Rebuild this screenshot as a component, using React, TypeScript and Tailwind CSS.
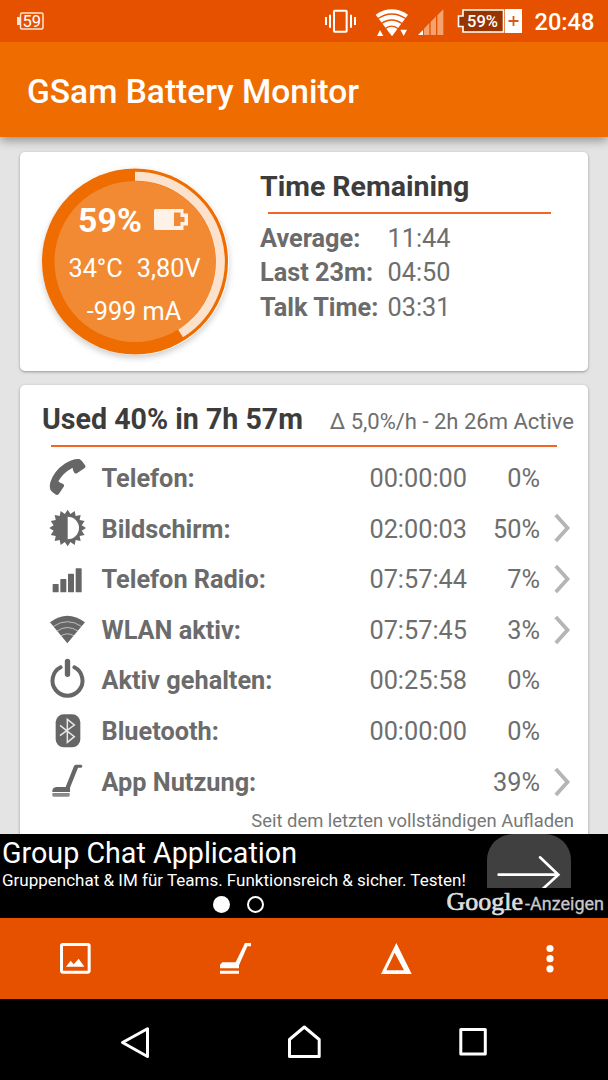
import type { ReactNode } from "react";

type Usage = {
  label: string;
  time?: string;
  percent: string;
  icon: ReactNode;
  more?: boolean;
};

const PhoneIcon = () => (
  <svg className="mb-[2px]" width="38" height="38" viewBox="117 234 114 114" fill="#666">
    <path d="M208 237 Q214 239 226 257 Q228 262 223 265 L202 279 Q196 283 193 278 Q187 268 188 263 Q158 279 145 304 Q150 309 158 311 Q164 313 162 319 L147 341 Q142 348 136 343 Q124 334 121 329 Q117 320 121 307 Q131 273 164 251 Q189 235 208 237Z" />
  </svg>
);

const spikes = Array.from({ length: 32 }, (_, i) => {
  const r = i % 2 ? 43 : 55;
  const a = (i * Math.PI) / 16;
  return `${(57 + r * Math.sin(a)).toFixed(1)},${(57 - r * Math.cos(a)).toFixed(1)}`;
}).join(" ");

const ScreenIcon = () => (
  <svg className="mb-[2px]" width="38" height="38" viewBox="1 0 114 114">
    <polygon points={spikes} fill="#666" />
    <path d="M57 23 A34 34 0 0 1 57 91Z" fill="#fff" />
  </svg>
);

const SignalIcon = () => (
  <svg className="mb-[1px]" width="38" height="38" viewBox="117 541 114 114" fill="#666">
    <rect x="128" y="613" width="18" height="25" rx="2" />
    <rect x="151" y="598" width="18" height="40" rx="2" />
    <rect x="174" y="582" width="18" height="56" rx="2" />
    <rect x="197" y="566" width="18" height="72" rx="2" />
  </svg>
);

const WifiIcon = () => (
  <svg className="mb-[3px]" width="38" height="38" viewBox="117 30 114 114">
    <path d="M120 67 Q172 28 225 67 L172 130Z" fill="#666" />
    <g fill="none" stroke="#d0d0d0" strokeWidth="2.500">
      <path d="M129 80 Q172 50 216 80" />
      <path d="M140 94 Q172 71 205 94" />
      <path d="M152 108 Q172 95 193 108" />
    </g>
  </svg>
);

const PowerIcon = () => (
  <svg className="mb-[6px]" width="38" height="40" viewBox="117 174 114 120" fill="none" stroke="#666" strokeLinecap="round">
    <path d="M152 202 A45 45 0 1 0 193 202" strokeWidth="12" />
    <path d="M172.500 184 V223" strokeWidth="16" />
  </svg>
);

const BluetoothIcon = () => (
  <svg className="mb-[2px]" width="38" height="38" viewBox="117 334 114 114">
    <rect x="137" y="341" width="74" height="99" rx="24" fill="#666" />
    <path d="M150 374 L193 408 L172 425 V356 L193 373 L150 405" fill="none" stroke="#e8e8e8" strokeWidth="4.500" />
  </svg>
);

const VacuumIcon = () => (
  <svg className="mb-[2px]" width="38" height="38" viewBox="117 487 114 114" fill="#666">
    <path d="M198 495 H213 Q217 496 217 500 Q217 504 213 504 H204 L180 564 V577 H127 V571 Q129 563 138 562 H167 L192 499 Q194 495 198 495Z" />
    <path d="M127 580 H179 V587 Q179 591 175 591 H131 Q127 591 127 587Z" fill="#8a8a8a" />
  </svg>
);

const rows: Usage[] = [
  { label: "Telefon:", time: "00:00:00", percent: "0%", icon: <PhoneIcon /> },
  { label: "Bildschirm:", time: "02:00:03", percent: "50%", icon: <ScreenIcon />, more: true },
  { label: "Telefon Radio:", time: "07:57:44", percent: "7%", icon: <SignalIcon />, more: true },
  { label: "WLAN aktiv:", time: "07:57:45", percent: "3%", icon: <WifiIcon />, more: true },
  { label: "Aktiv gehalten:", time: "00:25:58", percent: "0%", icon: <PowerIcon /> },
  { label: "Bluetooth:", time: "00:00:00", percent: "0%", icon: <BluetoothIcon /> },
  { label: "App Nutzung:", percent: "39%", icon: <VacuumIcon />, more: true },
];

const remaining = [
  ["Average:", "11:44"],
  ["Last 23m:", "04:50"],
  ["Talk Time:", "03:31"],
];

function StatusBar() {
  return (
    <div className="relative z-10 flex h-[42px] shrink-0 items-start bg-[#e65100] pl-[17px] text-white">
      <svg className="mt-3" width="27" height="18" viewBox="0 0 27 18" fill="none">
        <rect x="3.500" y="1" width="22.500" height="16" rx="1.500" stroke="#ffe3d0" strokeWidth="1.500" />
        <path d="M0 5 H3 V13 H0Z" fill="#ffe3d0" />
        <text x="14.700" y="14.800" textAnchor="middle" fontSize="16.500" fill="#fff" className="font-['Roboto',sans-serif]">59</text>
      </svg>

      {/* vibrate */}
      <svg className="mt-[9px] ml-[281px]" width="31" height="24" viewBox="63 27 93 72" fill="none" stroke="#fff" strokeWidth="6">
        <rect x="90" y="32" width="38" height="63" rx="2" />
        <path d="M78 44 V83 M66 51 V75 M141 44 V83 M153 51 V75" />
      </svg>

      {/* wifi with traffic arrows */}
      <svg className="mt-[9px] ml-[19px]" width="34" height="28" viewBox="213 27 102 84" fill="none">
        <path d="M215 44 Q263 12 312 44 L264 109Z" fill="#fff" />
        <path d="M220 57 Q263 27 307 57 M230 72 Q263 48 296 72 M242 87 Q263 70 284 87" stroke="#e65100" strokeWidth="4" />
        <path d="M219 108 L228 90 L238 108Z M289 89 H309 L299 108Z" fill="#fff" />
      </svg>

      <svg className="mt-[9px] ml-[9px]" width="26" height="26" viewBox="342 27 78 78">
        <path d="M342 105 L357 90 V105Z" fill="#fff" />
        <path d="M360 105 V86 L376 69 V105Z M380 105 V66 L396 49 V105Z M400 105 V46 L418 28 V105Z" fill="#f4a36f" />
      </svg>

      {/* battery level */}
      <svg className="mt-[9px] ml-[13px]" width="65" height="24" viewBox="0 0 65 24">
        <path d="M6 1 H46.500 V23 H6 V17.500 H1.500 V7 H6Z" fill="#963500" stroke="#fff" strokeWidth="1.600" />
        <rect x="48" y="0" width="17" height="24" fill="#fff" />
        <path d="M56.500 7 V17 M51.500 12 H61.500" stroke="#d65a18" strokeWidth="1.800" />
        <text x="25.500" y="17.800" textAnchor="middle" fontSize="16.500" fontWeight="500" fill="#fff" className="font-['Roboto',sans-serif]">59%</text>
      </svg>
      <span className="ml-[12.500px] text-[23.6px] leading-[44px] font-medium">20:48</span>
    </div>
  );
}

function Gauge() {
  return (
    <div className="relative mt-[16px] ml-[21.500px] h-[187px] w-[187px] shrink-0 rounded-full shadow-[0_3px_6px_rgba(0,0,0,0.2)]">
      <svg className="absolute inset-0" width="187" height="187" viewBox="-93 -93.5 187 187">
        <circle r="93" fill="#ef6c00" />
        <circle r="80.500" fill="#f28a33" />
        <path d="M0 -85.200 A85.200 85.200 0 0 1 45.600 72" fill="none" stroke="#fce2cc" strokeWidth="9" />
      </svg>
      <div className="relative flex flex-col items-center pt-[30px] text-[25.3px] leading-[45px] text-white">
        <div className="mr-1 flex items-center gap-3">
          <span className="text-[33.8px] font-bold">59%</span>
          <svg className="mb-[3px]" width="34" height="21" viewBox="0 0 34 21">
            <path d="M1.500 0 H29.500 V4.500 H34 V16.500 H29.500 V21 H1.500 Q0 21 0 19.500 V1.500 Q0 0 1.500 0Z M20 3.500 V17 H26.500 V13 H30.500 V8 H26.500 V3.500Z" fill="#fdf1e8" fillRule="evenodd" />
          </svg>
        </div>
        <div className="mt-[3px] mr-px flex gap-[14px]">
          <span>34°C</span>
          <span>3,80V</span>
        </div>
        <div className="mr-[2px] leading-[41px]">-999 mA</div>
      </div>
    </div>
  );
}

function Chevron() {
  return (
    <svg width="17" height="30" viewBox="0 0 17 30" fill="none" stroke="#b5b5b5" strokeWidth="3.800">
      <path d="M1.800 2 L13.500 15 L1.800 28" />
    </svg>
  );
}

function UsageRow({ row }: { row: Usage }) {
  return (
    <div className="flex h-[50.670px] items-center text-[25.3px] text-[#6e6e6e]">
      <div className="ml-[28.500px] flex w-[38px] justify-center">{row.icon}</div>
      <span className="ml-[15px] flex-1 pt-px font-bold text-[#6b6b6b]">{row.label}</span>
      <span className="pt-px">{row.time}</span>
      <span className="w-[73px] pt-px text-right">{row.percent}</span>
      <div className="w-[48px] pb-px pl-[14px]">{row.more && <Chevron />}</div>
    </div>
  );
}

function AdBanner() {
  return (
    <div className="relative z-10 flex h-[84px] shrink-0 flex-col bg-black pl-[2px] text-white">
      <span className="pt-px text-[28.7px] leading-[37px]">Group Chat Application</span>
      <span className="text-[17px] leading-[17px]">Gruppenchat &amp; IM für Teams. Funktionsreich &amp; sicher. Testen!</span>
      <div className="mt-[7px] ml-[210.500px] flex gap-[17px]">
        <span className="h-[17px] w-[17px] rounded-full bg-white" />
        <span className="h-[17px] w-[17px] rounded-full border-2 border-white" />
      </div>
      <div className="absolute top-0 right-[37px] h-[53.500px] w-[84.500px] overflow-hidden rounded-t-[26px] bg-[#404040]">
        <svg width="84" height="54" viewBox="548 27 252 162" fill="none" stroke="#fff" strokeWidth="8" strokeLinecap="round">
          <path d="M583 149 H760 M707 97 L762 149 L714 193" />
        </svg>
      </div>
      <div className="absolute right-1 bottom-0 flex items-baseline leading-[29px] text-[#c8c8c8]">
        <span className="font-['Liberation_Serif',serif] text-[26px] text-[#dedede] [-webkit-text-stroke:0.7px_#dedede]">Google</span>
        <span className="ml-[2px] text-[18px] [-webkit-text-stroke:0.3px_#c8c8c8]">-Anzeigen</span>
      </div>
    </div>
  );
}

function Toolbar() {
  return (
    <div className="flex h-[81px] shrink-0 items-center bg-[#e65100] pl-[60px]">
      <svg width="31" height="31" viewBox="180 85 93 93">
        <rect x="184.500" y="89.500" width="83" height="83" rx="4" fill="none" stroke="#fff" strokeWidth="9" />
        <path d="M198 156 L212 138 L221 149 L236 132 L253 156Z" fill="#fff" />
      </svg>
      <svg className="ml-[129px]" width="31" height="31" viewBox="660 85 93 93" fill="#fff">
        <path d="M735 85 H753 V95 H742 L717 152 V161 H660 V150 L667 143 H707Z M660 168 H717 V177 H660Z" />
      </svg>
      <svg className="ml-[130px]" width="31" height="31" viewBox="230 84 93 93">
        <path d="M276 84 L322 177 H230Z M271 113 L246 166 H299Z" fill="#fff" fillRule="evenodd" />
      </svg>
      <svg className="ml-[134px]" width="8" height="30" viewBox="0 0 8 30" fill="#fff">
        <circle cx="4" cy="4.500" r="3.600" />
        <circle cx="4" cy="14.700" r="3.600" />
        <circle cx="4" cy="24.800" r="3.600" />
      </svg>
    </div>
  );
}

function NavBar() {
  return (
    <div className="flex h-[81px] shrink-0 items-start bg-black pt-[25px] pl-[120px]">
      <svg width="30" height="35" viewBox="0 0 30 35" fill="none" stroke="#fff" strokeWidth="3" strokeLinejoin="round">
        <path d="M27.500 4.800 V32.500 L2.500 18.500Z" />
      </svg>
      <svg className="ml-[137px]" width="35" height="35" viewBox="0 0 35 35" fill="none" stroke="#fff" strokeWidth="3" strokeLinejoin="round">
        <path d="M2.500 15.500 L17.300 3 L32.200 15.500 V32.500 H2.500Z" />
      </svg>
      <svg className="ml-[137px]" width="28" height="35" viewBox="0 0 28 35" fill="none" stroke="#fff" strokeWidth="3" strokeLinejoin="round">
        <rect x="1.800" y="5.500" width="24.500" height="24.500" />
      </svg>
    </div>
  );
}

export default function App() {
  return (
    <div className="flex h-[1080px] w-[608px] flex-col overflow-hidden bg-[#e4e4e4] font-['Roboto',sans-serif]">
      <StatusBar />
      <header className="relative flex h-[95px] shrink-0 items-center bg-[#ef6c00] pt-[5px] pl-[27px] shadow-[0_3px_10px_rgba(0,0,0,0.4)]">
        <h1 className="text-[33.5px] font-medium text-white">GSam Battery Monitor</h1>
      </header>

      <main className="flex min-h-0 flex-1 flex-col gap-[14px] overflow-hidden px-5 pt-[15px]">
        <section className="flex h-[219px] shrink-0 rounded-[5px] bg-white shadow-[0_1px_3px_rgba(0,0,0,0.35)]">
          <Gauge />
          <div className="ml-[31.500px] flex-1 pt-[15px]">
            <h2 className="text-[28.5px] leading-[40px] font-bold text-[#3c3c3c]">Time Remaining</h2>
            <div className="mt-[5px] ml-[8px] h-[2px] w-[283px] bg-[#f26522]" />
            <dl className="mt-[7.500px] text-[25.3px] leading-[34.600px] text-[#6e6e6e]">
              {remaining.map(([name, value]) => (
                <div key={name} className="flex">
                  <dt className="w-[127.500px] font-bold whitespace-nowrap text-[#6b6b6b]">{name}</dt>
                  <dd>{value}</dd>
                </div>
              ))}
            </dl>
          </div>
        </section>

        <section className="h-[460px] shrink-0 rounded-[5px] bg-white shadow-[0_1px_3px_rgba(0,0,0,0.35)]">
          <div className="flex h-[60px] items-baseline justify-between pr-[14px] pl-[22px] leading-[68px] whitespace-nowrap">
            <h2 className="text-[28.6px] font-bold text-[#3c3c3c]">Used 40% in 7h 57m</h2>
            <span className="text-[22px] text-[#6e6e6e]">Δ 5,0%/h - 2h 26m Active</span>
          </div>
          <div className="ml-[31px] h-[2px] w-[506px] bg-[#f26522]" />
          <div className="pt-[6px]">
            {rows.map((row) => (
              <UsageRow key={row.label} row={row} />
            ))}
          </div>
          <p className="pr-[14px] text-right text-[18.4px] leading-[26px] text-[#777]">Seit dem letzten vollständigen Aufladen</p>
        </section>
      </main>

      <AdBanner />
      <Toolbar />
      <NavBar />
    </div>
  );
}
